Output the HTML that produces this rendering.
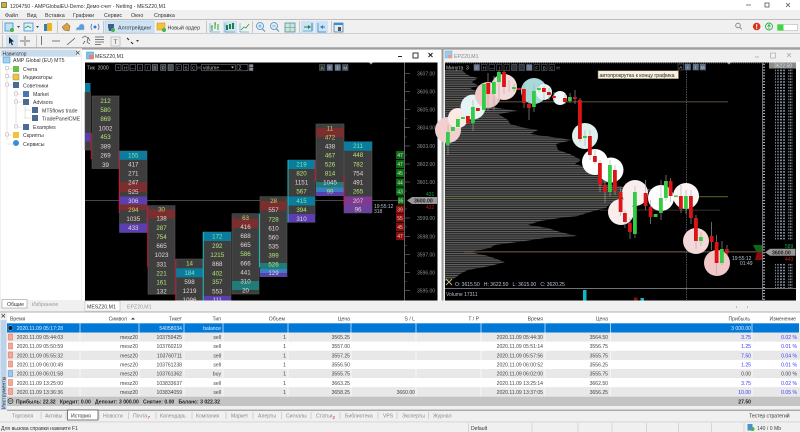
<!DOCTYPE html>
<html><head><meta charset="utf-8"><title>MESZ20,M1</title>
<style>
html,body{margin:0;padding:0;background:#f0f0f0;width:800px;height:432px;overflow:hidden}
svg{display:block;filter:blur(.25px);font-family:"Liberation Sans","Noto Sans CJK SC",sans-serif}
text{white-space:pre}
</style></head><body>
<svg width="800" height="432" viewBox="0 0 800 432" xmlns="http://www.w3.org/2000/svg">
<defs>
<pattern id="prof" width="2" height="2.2" patternUnits="userSpaceOnUse"><rect width="2" height="2.2" fill="#1e1e1e"/><rect width="2" height="1.1" fill="#646464"/></pattern>
<pattern id="tick" width="8" height="2.9" patternUnits="userSpaceOnUse"><rect width="5" height="1" fill="#b8bec8"/></pattern>
<pattern id="lab" width="9" height="2.9" patternUnits="userSpaceOnUse"><rect width="2" height="1.6" fill="#7b8594"/><rect x="3" width="2" height="1.6" fill="#5f6875"/><rect x="6" width="2" height="1.6" fill="#828c9a"/></pattern>
<pattern id="lab2" width="5" height="2.9" patternUnits="userSpaceOnUse"><rect width="1.5" height="1.6" fill="#828c9a"/><rect x="2.5" width="2" height="1.6" fill="#5f6875"/></pattern>
</defs>
<rect width="800" height="432" fill="#f0f0f0"/>
<!-- title -->
<rect width="800" height="10" fill="#fff"/>
<rect x="1.5" y="2.5" width="5" height="5" fill="#e8a33a" stroke="#3f7f3a" stroke-width=".8"/>
<text x="10" y="8" font-size="5.2" fill="#333">1204750 - AMPGlobalEU-Demo: Демо-счет - Netting - MESZ20,M1</text>
<path d="M746 5h5" stroke="#666" stroke-width=".8"/><rect x="765" y="3" width="4" height="4" fill="none" stroke="#555" stroke-width=".8"/><path d="M786 3l4 4M790 3l-4 4" stroke="#555" stroke-width=".8"/>
<!-- menu -->
<g font-size="5.3" fill="#333"><text x="5" y="17">Файл</text><text x="27" y="17">Вид</text><text x="45" y="17">Вставка</text><text x="73" y="17">Графики</text><text x="104" y="17">Сервис</text><text x="131" y="17">Окно</text><text x="154" y="17">Справка</text></g>
<rect y="19" width="800" height="1" fill="#bdbdbd"/>
<!-- toolbar 1 -->
<g>
<rect x="2" y="21" width="1" height="12" fill="#c6c6c6"/>
<rect x="5" y="23" width="8" height="8" fill="#bfe0f5" stroke="#3b8ed0" stroke-width=".8"/><circle cx="12" cy="30" r="2" fill="#45b24a"/><path d="M17 26h3l-1.5 2z" fill="#444"/>
<rect x="24" y="23" width="9" height="8" fill="#dff0fa" stroke="#3b8ed0" stroke-width=".8"/><path d="M25 28l3-2 3 2" stroke="#2e9e44" fill="none" stroke-width=".8"/><path d="M36 26h3l-1.5 2z" fill="#444"/>
<rect x="44" y="24" width="4" height="7" fill="#2c7fc4"/><rect x="47" y="23" width="5" height="8" fill="#efb51f"/>
<rect x="57" y="21" width="1" height="12" fill="#c6c6c6"/>
<path d="M62 27l5-4 3 3-1 5-5-1z" fill="#d9a24a" stroke="#7a5a22" stroke-width=".5"/>
<path d="M76 30q0-3 3-3 0-3 3-3 3 0 2 6z" fill="#5a9ee0" stroke="#bcd" stroke-width=".5"/>
<circle cx="95" cy="27" r="1.5" fill="#3b78c9"/><path d="M92 24q-2 3 0 6M98 24q2 3 0 6" stroke="#3b78c9" fill="none" stroke-width=".8"/>
<rect x="103" y="21" width="1" height="12" fill="#c6c6c6"/>
<rect x="105" y="21" width="49" height="12" fill="#cde2f5" stroke="#a6c8e6" stroke-width=".5"/>
<path d="M108 24h6v3l-1 4h-4l-1-4z" fill="#3a5f8a"/><circle cx="113" cy="30" r="2" fill="#45b24a"/>
<text x="118" y="29.6" font-size="5.3" fill="#333">Алготрейдинг</text>
<rect x="157" y="23" width="8" height="7" fill="#efc33a" stroke="#c48f12" stroke-width=".5"/><circle cx="164" cy="30" r="2" fill="#45b24a"/>
<text x="167.500" y="29.600" font-size="5.300" fill="#333">Новый ордер</text>
<rect x="206" y="21" width="1" height="12" fill="#c6c6c6"/>
<path d="M212 31v-6M212 27h-1M215 29v-7M215 24h1M218 30v-6" stroke="#2e9e44" stroke-width="1"/><path d="M210 32h10M210 32v-9" stroke="#2c7fc4" stroke-width=".5" fill="none"/>
<rect x="223" y="21" width="14" height="12" fill="#cde2f5"/>
<rect x="226" y="25" width="2" height="5" fill="#1f7f46"/><rect x="229" y="24" width="2" height="5" fill="#1f7f46"/><rect x="232" y="23" width="2" height="6" fill="#1f7f46"/><path d="M225 32h10M225 32v-9" stroke="#2c7fc4" stroke-width=".5" fill="none"/>
<path d="M241 30l3-3 2 1 3-4" stroke="#2e9e44" fill="none" stroke-width=".8"/><path d="M240 32h9M240 32v-9" stroke="#2c7fc4" stroke-width=".5" fill="none"/>
<rect x="252" y="21" width="1" height="12" fill="#c6c6c6"/>
<circle cx="260" cy="26" r="3.500" fill="#dcecf8" stroke="#4a8cc4" stroke-width=".8"/><path d="M262.500 29l2.500 2.500" stroke="#4a8cc4"/><path d="M258.500 26h3M260 24.500v3" stroke="#3a7ab0" stroke-width=".6"/>
<circle cx="274" cy="26" r="3.500" fill="#dcecf8" stroke="#4a8cc4" stroke-width=".8"/><path d="M276.500 29l2.500 2.500" stroke="#4a8cc4"/><path d="M272.500 26h3" stroke="#3a7ab0" stroke-width=".6"/>
<rect x="285" y="23" width="10" height="9" fill="#cfe6c8" stroke="#4a8cc4" stroke-width=".8"/><path d="M290 23v9M285 27.500h10" stroke="#4a8cc4" stroke-width=".5"/>
<rect x="299" y="21" width="1" height="12" fill="#c6c6c6"/>
<rect x="301" y="21" width="13" height="12" fill="#cde2f5"/><path d="M304 27h5" stroke="#1f7f46"/><path d="M308 25l3 2-3 2z" fill="#1f7f46"/><path d="M312 23v8" stroke="#2c7fc4"/><path d="M303 31h9" stroke="#2c7fc4" stroke-width=".5"/>
<rect x="315" y="21" width="13" height="12" fill="#cde2f5"/><path d="M318 23v9h8" stroke="#2c7fc4" fill="none" stroke-width=".7"/><path d="M322 27h3" stroke="#2c7fc4"/><path d="M323 25l-3 2 3 2z" fill="#2c7fc4"/>
<rect x="331" y="21" width="1" height="12" fill="#c6c6c6"/>
<rect x="334" y="23" width="9" height="9" fill="#dcecf8" stroke="#3b6f9e" stroke-width=".7"/><rect x="334" y="23" width="9" height="2" fill="#3b8ed0"/><rect x="338" y="27" width="3" height="4" fill="#555"/>
<path d="M738 25.500m-2.300 0a2.300 2.300 0 1 0 4.600 0a2.300 2.300 0 1 0-4.600 0M740 27.500l2 2" stroke="#777" stroke-width=".8" fill="none"/>
<circle cx="756.700" cy="26.500" r="3.800" fill="#d9301c"/><rect x="756.200" y="24" width="1" height="3.500" fill="#fff"/><rect x="756.200" y="28" width="1" height="1" fill="#fff"/>
<circle cx="769" cy="26.500" r="3.500" fill="none" stroke="#2fae4d" stroke-width=".9"/><path d="M769 29v-4M767.500 26.500l1.500-2 1.500 2" stroke="#2fae4d" fill="none" stroke-width=".8"/>
<rect x="777.500" y="24.500" width="20" height="6" fill="#fff" stroke="#aaa" stroke-width=".5"/><rect x="777.500" y="24.500" width="6" height="6" fill="#40d840"/>
</g>
<rect y="33" width="800" height="1" fill="#cfcfcf"/>
<!-- toolbar 2 -->
<rect x="2" y="35" width="1" height="12" fill="#c6c6c6"/>
<rect x="6" y="35" width="12" height="12" fill="#cde2f5"/>
<path d="M9 37l5 4.500-2.500.3 1.500 3-1.200.5-1.300-3-1.500 1.700z" fill="#222"/>
<path d="M25 36v10M20 41h4M26 41h4" stroke="#444" stroke-width=".7"/>
<rect x="36" y="35" width="1" height="12" fill="#c6c6c6"/>
<path d="M41.500 36v9M52 41h8M67 45l8-7" stroke="#555" stroke-width=".8"/>
<path d="M82 38l3-2 3 2-1 4 3 2M83 44l2-3M88 37l2 4" stroke="#555" stroke-width=".7" fill="none"/>
<path d="M95 37h9M95 39.500h9M95 42h9M95 44.500h6" stroke="#555" stroke-width=".8"/>
<rect x="111" y="37" width="9" height="9" fill="none" stroke="#999" stroke-width=".5"/><text x="115.500" y="44" font-size="6.500" text-anchor="middle" fill="#555">T</text>
<path d="M127 38l2 2M131 42l2 2" stroke="#333" stroke-width="1.200"/><path d="M136 40h3l-1.500 2z" fill="#444"/>
<rect y="47" width="800" height="1.500" fill="#b4b4b4"/>
<!-- navigator -->
<rect x="0" y="48.500" width="82" height="259" fill="#f0f0f0"/>
<rect x="1" y="50" width="76" height="6.500" fill="#c9dcef"/>
<text x="2.500" y="55.500" font-size="5" fill="#333">Навигатор</text>
<path d="M76 51l3.500 3.500M79.500 51l-3.500 3.500" stroke="#444" stroke-width=".7"/>
<rect x="1" y="57" width="80" height="243" fill="#fff"/>
<path d="M7 66v74M7 69h6M7 77h6M7 85h6M7 135h6M7 144h6M16 90v38M16 94h6M16 102h6M16 127h6M25 106v13M25 110h6M25 118h6" stroke="#c8c8c8" stroke-width=".5" fill="none"/>
<g fill="#333" font-size="5.200">
<rect x="3" y="57" width="7" height="6" fill="#9fd0f0" stroke="#3b8ed0" stroke-width=".5"/><text x="13" y="62">AMP Global (EU) MT5</text>
<rect x="13" y="66" width="6" height="6" fill="#6cbf4a"/><text x="23" y="71">Счета</text>
<rect x="13" y="74" width="6" height="6" fill="#efc33a" stroke="#777" stroke-width=".4"/><text x="23" y="79">Индикаторы</text>
<rect x="13" y="82" width="6" height="6" fill="#4a6c94"/><text x="23" y="87.500">Советники</text>
<rect x="23" y="91" width="6" height="6" fill="#4a78ac"/><text x="33" y="96">Market</text>
<rect x="23" y="99" width="6" height="6" fill="#4a6c94"/><text x="33" y="104">Advisors</text>
<rect x="32" y="107" width="6" height="6" fill="#4a6c94"/><text x="42" y="112.500">MT5flows trade</text>
<rect x="32" y="115" width="6" height="6" fill="#4a6c94"/><text x="42" y="120.500">TradePanelCME</text>
<rect x="23" y="124" width="6" height="6" fill="#4a6c94"/><text x="33" y="129">Examples</text>
<rect x="13" y="132" width="6" height="6" fill="#efc33a"/><text x="23" y="137">Скрипты</text>
<circle cx="16" cy="143" r="3" fill="#3b8ed0"/><text x="23" y="146">Сервисы</text>
</g>
<g fill="#fff" stroke="#aaa" stroke-width=".5"><rect x="5.500" y="66.500" width="3" height="3"/><rect x="5.500" y="74.500" width="3" height="3"/><rect x="5.500" y="83" width="3" height="3"/><rect x="14.500" y="92" width="3" height="3"/><rect x="14.500" y="100" width="3" height="3"/><rect x="14.500" y="125" width="3" height="3"/><rect x="5.500" y="133" width="3" height="3"/></g>
<rect x="0" y="300" width="82" height="8" fill="#f0f0f0"/>
<rect x="2" y="299.500" width="25" height="8.500" fill="#fff" stroke="#888" stroke-width=".5"/>
<text x="7" y="306" font-size="5.200" fill="#333">Общие</text><text x="32" y="306" font-size="5.200" fill="#999">Избранное</text>
<!-- chart 1 window -->
<rect x="82" y="48.500" width="360" height="253" fill="#fff"/>
<rect x="82" y="48.500" width="360" height="1" fill="#888"/>
<rect x="86.500" y="52" width="7" height="7" fill="#7fc0ec" stroke="#3b8ed0" stroke-width=".5"/><rect x="89" y="55" width="5" height="4" fill="#e8836c"/>
<text x="95" y="58" font-size="5.200" fill="#333">MESZ20,M1</text>
<path d="M398 56.500h4" stroke="#222" stroke-width="1"/><rect x="413" y="53" width="5" height="5" fill="none" stroke="#222" stroke-width=".9"/><path d="M428.500 53l4 4M432.500 53l-4 4" stroke="#222" stroke-width="1.100"/>
<rect x="85" y="62.500" width="352.500" height="238" fill="#000"/>
<rect x="437.500" y="50" width="4" height="251" fill="#fff"/><rect x="441.500" y="48.500" width="2" height="253" fill="#9a9a9a"/>
<!-- chart 1 toolbar -->
<text x="87" y="69.500" font-size="5" fill="#b8bcc4">Тик  2000</text>
<g fill="#000" stroke="#8a8f98" stroke-width=".5"><rect x="115.700" y="64.500" width="5.300" height="6"/><rect x="122.800" y="64.500" width="5.300" height="6"/><rect x="130" y="64.500" width="5.300" height="6"/><rect x="137.300" y="64.500" width="5.300" height="6"/><rect x="145" y="64.500" width="5.300" height="6"/><rect x="152.300" y="64.500" width="5.300" height="6" fill="#30343a"/><rect x="160.600" y="64.500" width="5.300" height="6" fill="#30343a"/><rect x="168" y="64.500" width="5.300" height="6" fill="#4a505a"/><rect x="176" y="64.500" width="5.300" height="6"/><rect x="183.300" y="64.500" width="5.300" height="6"/><rect x="191" y="64.500" width="5.300" height="6"/><rect x="201.700" y="64.300" width="33.500" height="6.500"/><rect x="237" y="64.300" width="11" height="6.500"/></g>
<g font-size="4.500" fill="#9ea3ac" text-anchor="middle"><text x="118.300" y="69.500">+</text><text x="125.500" y="69.500">H</text><text x="132.600" y="69.500">—</text><text x="140" y="69.500">I</text><text x="147.600" y="69.500">/</text><text x="155" y="69.500">B</text><text x="163.200" y="69.500">P</text><text x="178.600" y="69.500">F</text><text x="186" y="69.500">B</text><text x="193.600" y="69.500">C</text><text x="199" y="69.500">H</text></g>
<text x="203" y="69.500" font-size="5" fill="#b8bcc4">volume</text><path d="M231 66.500h3l-1.500 2z" fill="#b8bcc4"/><text x="238.500" y="69.500" font-size="5" fill="#b8bcc4">2</text>
<rect x="249.200" y="64.300" width="4" height="3" fill="#8a8f98"/><rect x="249.200" y="67.800" width="4" height="3" fill="#8a8f98"/>
<g fill="#30343a" stroke="#6a707a" stroke-width=".5"><rect x="319.500" y="64.500" width="5.500" height="6"/><rect x="327" y="64.500" width="5.500" height="6" fill="#6d7c96"/><rect x="335" y="64.500" width="5.500" height="6" fill="#6d7c96"/><rect x="342.500" y="64.500" width="5.500" height="6" fill="#424a58"/></g>
<g font-size="4.500" fill="#c4c8d0" text-anchor="middle"><text x="322.200" y="69.300">A</text><text x="329.700" y="69.300">+</text><text x="337.700" y="69.300">I</text><text x="345.200" y="69.300">M</text></g>
<path d="M369 62.500h4l-2 2z" fill="#9cb0cc"/>
<!-- crosshair -->
<rect x="85" y="200" width="320" height=".8" fill="#5a5a5a"/>
<!-- footprint cells -->
<g fill="#3e3e3e" stroke="#555" stroke-width=".6">
<rect x="85" y="92" width="5.500" height="58"/>
<rect x="92" y="96" width="27" height="72.500"/>
<rect x="119.500" y="151" width="27.500" height="81.500"/>
<rect x="148" y="205.700" width="27" height="88.500"/>
<rect x="176" y="259" width="27" height="41.500"/>
<rect x="203.500" y="232" width="27.500" height="68.500"/>
<rect x="232" y="213.700" width="27" height="80.300"/>
<rect x="260" y="196.700" width="27" height="80"/>
<rect x="288" y="160" width="27" height="62.300"/>
<rect x="316" y="124" width="28" height="71.700"/>
<rect x="344" y="141.700" width="28" height="71.300"/>
</g>
<!-- coloured cells -->
<rect x="85" y="83" width="5.500" height="9" fill="#0a7d9e"/><rect x="85" y="133" width="5.500" height="8.500" fill="#5b3fb0"/>
<rect x="119.500" y="151" width="27.500" height="8.800" fill="#0a7d9e"/>
<rect x="119.500" y="182" width="27.500" height="10" fill="#7a2e2e"/>
<rect x="119.500" y="196.500" width="27.500" height="8" fill="#5b3fb0"/>
<rect x="119.500" y="204.500" width="27.500" height="5.500" fill="#7a2e2e"/>
<rect x="119.500" y="223.500" width="27.500" height="9" fill="#5b3fb0"/>
<rect x="148" y="209.500" width="27" height="9" fill="#7a2e2e"/>
<rect x="176" y="268.300" width="27" height="9" fill="#0a7d9e"/>
<rect x="203.500" y="232" width="27.500" height="9" fill="#0a7d9e"/>
<rect x="203.500" y="296" width="27.500" height="4.500" fill="#5b3fb0"/>
<rect x="232" y="218.500" width="27" height="9.500" fill="#7a2e2e"/>
<rect x="232" y="281" width="27" height="9" fill="#1f7c78"/>
<rect x="260" y="201" width="27" height="9.500" fill="#7a2e2e"/>
<rect x="260" y="263" width="27" height="6" fill="#1f7c78"/><rect x="260" y="269" width="27" height="4" fill="#3a7fc4"/><rect x="260" y="273" width="27" height="3.700" fill="#5b3fb0"/>
<rect x="288" y="160" width="27" height="9" fill="#0a7d9e"/><rect x="288" y="196.500" width="27" height="9" fill="#0a7d9e"/><rect x="288" y="214" width="27" height="8.300" fill="#5b3fb0"/>
<rect x="316" y="128" width="28" height="9" fill="#7a2e2e"/>
<rect x="316" y="182" width="28" height="5.500" fill="#1f7c78"/><rect x="316" y="187.500" width="28" height="4.500" fill="#3a7fc4"/><rect x="316" y="192" width="28" height="3.700" fill="#5b3fb0"/>
<rect x="344" y="141.700" width="28" height="9" fill="#0a7d9e"/>
<rect x="344" y="196.500" width="28" height="9" fill="#7d3a90"/><rect x="344" y="205.500" width="28" height="7.500" fill="#6a429c"/>
<!-- side bars -->
<g stroke-width=".9">
<path d="M91.200 133v26M119.200 151v62M147.700 205.700v61.500M175.700 259v41.500M315.700 160v22M344 175v30" stroke="#d01a3c"/>
<path d="M203.200 232v68.500M259.500 213.700v53.500M288 160v62.500" stroke="#19c6d0"/>
</g>
<!-- cell text -->
<g font-size="6.200" text-anchor="middle" fill="#e2d4d4">
<g transform="translate(105.500 0)"><text y="103" fill="#b4e478">212</text><text y="112" fill="#b4e478">580</text><text y="121" fill="#b4e478">869</text><text y="130.300">1002</text><text y="139" fill="#b4e478">453</text><text y="148.500">389</text><text y="157.700">269</text><text y="167">39</text></g>
<g transform="translate(133.300 0)"><text y="157.500" fill="#7de8a8">155</text><text y="166.600">417</text><text y="175.700">271</text><text y="184.700">247</text><text y="194">525</text><text y="203">306</text><text y="212" fill="#c8d06e">294</text><text y="221">1035</text><text y="230.200">433</text></g>
<g transform="translate(161.500 0)"><text y="211.700" fill="#c8d06e">30</text><text y="220.700">138</text><text y="229.900" fill="#b4e478">287</text><text y="239" fill="#b4e478">754</text><text y="248">665</text><text y="257.200">1023</text><text y="266.400">331</text><text y="275.500" fill="#b4e478">221</text><text y="284.700" fill="#b4e478">161</text><text y="293.500">132</text></g>
<g transform="translate(189.500 0)"><text y="265.500" fill="#b4e478">14</text><text y="275" fill="#7de8a8">184</text><text y="284">598</text><text y="293">1219</text><text y="302">1096</text></g>
<g transform="translate(217.300 0)"><text y="238.700" fill="#7de8a8">172</text><text y="248" fill="#b4e478">292</text><text y="257" fill="#b4e478">1215</text><text y="266.200">868</text><text y="275.300" fill="#b4e478">402</text><text y="284.200" fill="#b4e478">357</text><text y="293.300">553</text><text y="302">111</text></g>
<g transform="translate(245.500 0)"><text y="220" fill="#c8d06e">63</text><text y="229">416</text><text y="238">688</text><text y="247.200">665</text><text y="256.200" fill="#b4e478">586</text><text y="265.400">666</text><text y="274.500">441</text><text y="283.500">310</text><text y="292.700">20</text></g>
<g transform="translate(273.500 0)"><text y="203" fill="#c8d06e">28</text><text y="212">557</text><text y="221.500" fill="#b4e478">728</text><text y="230.500">610</text><text y="239.500">560</text><text y="248.500">535</text><text y="257.500" fill="#b4e478">399</text><text y="266.500" fill="#b4e478">526</text><text y="275">129</text></g>
<g transform="translate(301.500 0)"><text y="166.500" fill="#7de8a8">219</text><text y="175.500" fill="#b4e478">820</text><text y="184.500">1151</text><text y="193.700" fill="#b4e478">567</text><text y="203" fill="#7de8a8">415</text><text y="212" fill="#b4e478">394</text><text y="220.800">310</text></g>
<g transform="translate(330 0)"><text y="130.700" fill="#c8d06e">11</text><text y="139.500" fill="#c8d06e">472</text><text y="148.500">438</text><text y="157.500" fill="#b4e478">467</text><text y="166.700" fill="#b4e478">526</text><text y="175.700" fill="#b4e478">814</text><text y="184.700">1045</text><text y="193.700" fill="#b4e478">99</text></g>
<g transform="translate(358 0)"><text y="148.200" fill="#7de8a8">211</text><text y="157.200" fill="#b4e478">448</text><text y="166.300" fill="#b4e478">782</text><text y="175.700">754</text><text y="184.700">491</text><text y="193.700" fill="#b4e478">265</text><text y="203">207</text><text y="211.700">96</text></g>
</g>
<text x="374" y="208" font-size="5" fill="#b8c4d4">19:55:12</text><text x="374" y="213" font-size="5" fill="#b8c4d4">318</text>
<!-- delta boxes -->
<g fill="#0a6a14"><rect x="396" y="151" width="8" height="8"/><rect x="396" y="160" width="8" height="8"/><rect x="396" y="169" width="8" height="8"/><rect x="396" y="178.500" width="8" height="8"/><rect x="396" y="187.500" width="8" height="8"/><rect x="398" y="196.500" width="6" height="8"/></g>
<g fill="#8a0c0c"><rect x="396" y="205.500" width="8" height="8"/><rect x="396" y="214" width="8" height="8"/><rect x="396" y="223" width="8" height="8"/><rect x="396" y="232" width="8" height="8"/></g>
<g font-size="5" text-anchor="middle" fill="#d8e8d0"><text x="400" y="157">47</text><text x="400" y="166">47</text><text x="400" y="175">45</text><text x="400" y="184.500">44</text><text x="400" y="193.500">43</text><text x="400.500" y="202.500">36</text></g>
<g font-size="5" text-anchor="middle" fill="#f0c8c8"><text x="400" y="211.500">39</text><text x="400" y="220">55</text><text x="400" y="229">45</text><text x="400" y="238">47</text></g>
<!-- axis 1 -->
<rect x="404.300" y="62.500" width=".7" height="238" fill="#8a8f98"/>
<path d="M405 73.500h5M405 91.500h5M405 109.500h5M405 127.700h5M405 146h5M405 164h5M405 182h5M405 218h5M405 236.500h5M405 254.500h5M405 272.500h5M405 290.500h5" stroke="#8a8f98" stroke-width=".6"/>
<path d="M405 82.500h2M405 100.500h2M405 118.500h2M405 137h2M405 155h2M405 173h2M405 191h2M405 209h2M405 227h2M405 245.500h2M405 263.500h2M405 281.500h2" stroke="#666" stroke-width=".6"/>
<g font-size="5" fill="#8a8f98"><text x="417" y="75.500">3607.00</text><text x="417" y="93.500">3606.00</text><text x="417" y="111.500">3605.00</text><text x="417" y="129.700">3604.00</text><text x="417" y="148">3603.00</text><text x="417" y="166">3602.00</text><text x="417" y="184">3601.00</text><text x="417" y="220">3599.00</text><text x="417" y="238.500">3598.00</text><text x="417" y="256.500">3597.00</text><text x="417" y="274.500">3596.00</text><text x="417" y="292.500">3595.00</text></g>
<path d="M407 200.500l5-3.500h25v7h-25z" fill="#9a9a9a"/><text x="414" y="202.500" font-size="5.200" font-weight="bold" fill="#222">3600.00</text>
<text x="426" y="196" font-size="5" fill="#0aa84a">431</text><text x="426" y="209" font-size="5" fill="#d01818">422</text>
<!-- chart 2 window -->
<rect x="443.500" y="48.500" width="356.500" height="253" fill="#f0f0f0"/>
<rect x="443.500" y="48.500" width="356.500" height="1" fill="#888"/>
<rect x="445" y="51" width="7" height="7" fill="#9ccbea" stroke="#6eaedc" stroke-width=".5"/><rect x="448" y="55" width="4" height="3" fill="#eb9d8c"/>
<text x="454" y="58" font-size="5.200" fill="#888">EPZ20,M1</text>
<path d="M755 57h4" stroke="#aaa" stroke-width=".8"/><rect x="770.500" y="53" width="5" height="5" fill="none" stroke="#aaa" stroke-width=".7"/><path d="M787 53l4 4M791 53l-4 4" stroke="#aaa" stroke-width=".8"/>
<rect x="445" y="62.500" width="351" height="238" fill="#000"/>
<rect x="796" y="62" width="4" height="239" fill="#fff"/>
<path d="M445 63h351" stroke="#8a8f98" stroke-width=".6" stroke-dasharray="1 1"/>
<!-- profile -->
<polygon fill="url(#prof)" points="445,70 462,70 466,74 470,76 478,78 472,82 479,86 470,88 478,92 476,96 488,100 480,104 498,108 518,111 498,114 508,120 510,124 525,128 538,130 530,134 552,137 572,140 556,144 558,150 570,154 581,160 575,164 595,170 605,178 618,181 600,184 640,188 655,190 640,194 632,198 612,202 606,208 590,212 578,216 560,218 540,221 528,225 548,228 560,232 577,236 545,238 525,241 495,245 490,248 470,252 488,256 505,262 490,266 468,270 460,274 455,278 445,281"/>
<!-- long lines -->
<rect x="445" y="101.400" width="283" height=".9" fill="#6a5a46"/>
<rect x="445" y="196.300" width="283" height=".9" fill="#5d7a24"/>
<rect x="600" y="209.700" width="120" height=".8" fill="#404040"/>
<rect x="464" y="251.300" width="298" height="1.100" fill="#6a5a46"/>
<rect x="686.300" y="63" width=".7" height="237" fill="#8a8f98" opacity=".8"/><path d="M686.600 63v237" stroke="#000" stroke-width=".8" stroke-dasharray="1 1.500"/>
<!-- circles -->
<g>
<circle cx="448" cy="130" r="13" fill="#f2d0d0"/><circle cx="458" cy="118" r="10" fill="#fce8e4"/><circle cx="473" cy="107" r="12.500" fill="#e4f3f3"/><circle cx="488" cy="95" r="13" fill="#f0c8c8"/><circle cx="504" cy="87" r="13" fill="#f4dada"/>
<circle cx="534" cy="91" r="13" fill="#a8d8d8"/><circle cx="544" cy="92" r="8" fill="#e8f4f4"/><circle cx="560" cy="98" r="7" fill="#f0f8f8"/>
<circle cx="585" cy="136" r="13" fill="#e0f0ee"/><circle cx="595" cy="162" r="13" fill="#fff"/><circle cx="611" cy="170" r="12.500" fill="#fff"/>
<circle cx="635" cy="193" r="13" fill="#f8eeee"/><circle cx="621" cy="212" r="13" fill="#f8ecec"/><circle cx="661" cy="198" r="13" fill="#fff"/><circle cx="686" cy="196" r="13" fill="#fdf5f5"/>
<circle cx="696" cy="241" r="13" fill="#f2d8d8"/><circle cx="717" cy="263" r="13" fill="#f0c8c8"/>
</g>
<!-- wicks -->
<path d="M448 125v30M473 100v31M488 73v38M494 76v34M499 70v32M504 70v24M509 80v12M514 84v8M524 84v24M529 100v20M534 84v28M539 84v8M544 86v14M549 88v12M554 92v10M565 94v10M570 93v10M575 90v14M580 98v44M585 130v16M590 130v30M595 150v14M600 160v32M605 180v23M610 160v36M615 165v30M620.700 188v28M625 210v18M630 218v21M635 186v52M645.700 180v30M650.700 200v24M661 180v40M666 175v26M670.700 178v24M681 185v28M686 190v24M691 190v34M696 215v34M701 232v14M711.700 222v28M716.700 235v40M722 241v24M727 245v10" stroke="#aaa" stroke-width=".6"/>
<!-- candles -->
<g fill="#dd1414">
<rect x="466" y="116" width="3.800" height="7"/><rect x="476" y="108" width="3.800" height="3"/><rect x="486.300" y="83" width="3.800" height="11"/><rect x="502.100" y="72" width="3.800" height="15"/><rect x="517" y="88" width="3.800" height="2"/><rect x="522" y="89" width="3.800" height="14"/><rect x="527" y="104" width="3.800" height="4"/><rect x="542" y="88" width="3.800" height="4"/><rect x="547" y="92" width="3.800" height="3"/><rect x="552" y="96" width="3.800" height="2"/><rect x="563" y="98" width="3.800" height="4"/><rect x="573" y="97" width="3.800" height="2"/><rect x="578" y="100" width="3.800" height="39"/><rect x="588" y="136" width="3.800" height="19"/><rect x="593" y="156" width="3.800" height="6"/><rect x="598" y="163" width="3.800" height="22"/><rect x="603" y="185" width="3.800" height="7"/><rect x="613" y="170" width="3.800" height="21"/><rect x="618.700" y="192" width="3.800" height="20"/><rect x="623" y="213" width="3.800" height="9"/><rect x="628" y="223" width="3.800" height="9"/><rect x="643.700" y="193" width="3.800" height="13"/><rect x="648.700" y="207" width="3.800" height="10"/><rect x="668.700" y="181" width="3.800" height="15"/><rect x="679" y="196" width="3.800" height="13"/><rect x="689" y="196" width="3.800" height="22"/><rect x="694" y="218" width="3.800" height="23"/><rect x="709.700" y="236" width="3.800" height="6"/><rect x="714.700" y="242" width="3.800" height="21"/><rect x="725" y="249" width="3.800" height="4"/>
</g>
<g fill="#33cc44">
<rect x="446" y="132" width="3.800" height="13"/><rect x="451" y="127" width="3.800" height="4"/><rect x="456" y="119" width="3.800" height="8"/><rect x="461" y="117" width="3.800" height="2"/><rect x="471" y="107" width="3.800" height="16"/><rect x="482" y="84" width="3.800" height="26"/><rect x="492" y="82" width="3.800" height="12"/><rect x="497" y="72" width="3.800" height="10"/><rect x="512" y="87" width="3.800" height="2"/><rect x="532" y="91" width="3.800" height="16"/><rect x="537" y="88" width="3.800" height="2"/><rect x="568" y="97" width="3.800" height="4"/><rect x="583" y="136" width="3.800" height="2"/><rect x="608" y="165" width="3.800" height="27"/><rect x="633" y="192" width="3.800" height="42"/><rect x="653.700" y="214" width="3.800" height="3"/><rect x="659" y="198" width="3.800" height="15"/><rect x="664" y="181" width="3.800" height="17"/><rect x="674" y="195.500" width="3.800" height="1.500"/><rect x="684" y="196" width="3.800" height="13"/><rect x="699" y="237" width="3.800" height="4"/><rect x="720" y="249" width="3.800" height="14"/>
</g>
<!-- chart2 toolbar -->
<text x="446" y="69.500" font-size="5" fill="#b8bcc4">Минута  3</text>
<g fill="#000" stroke="#6a707a" stroke-width=".5"><rect x="474" y="64.500" width="5.500" height="6" fill="#6d7c96"/><rect x="481.500" y="64.500" width="5.500" height="6"/><rect x="489" y="64.500" width="5.500" height="6"/><rect x="496.500" y="64.500" width="5.500" height="6"/><rect x="504" y="64.500" width="5.500" height="6"/><rect x="511.500" y="64.500" width="5.500" height="6" fill="#30343a"/><rect x="519" y="64.500" width="5.500" height="6" fill="#30343a"/><rect x="526.500" y="64.500" width="5.500" height="6" fill="#6d7c96"/><rect x="534" y="64.500" width="5.500" height="6"/><rect x="541.500" y="64.500" width="5.500" height="6"/><rect x="549" y="64.500" width="5.500" height="6"/></g>
<g font-size="4.500" fill="#9ea3ac" text-anchor="middle"><text x="476.700" y="69.300">+</text><text x="484.200" y="69.300">H</text><text x="491.700" y="69.300">—</text><text x="499.200" y="69.300">I</text><text x="506.700" y="69.300">/</text><text x="536.700" y="69.300">F</text><text x="544.200" y="69.300">B</text><text x="551.700" y="69.300">C</text><text x="558" y="69.300">H</text></g>
<g fill="#30343a" stroke="#6a707a" stroke-width=".5"><rect x="678" y="64" width="5.500" height="6" fill="#000"/><rect x="685" y="64" width="5.500" height="6" fill="#58708c"/><rect x="693" y="64" width="5.500" height="6" fill="#58708c"/><rect x="700" y="64" width="5.500" height="6" fill="#58708c"/></g>
<g font-size="4.500" fill="#c4c8d0" text-anchor="middle"><text x="680.700" y="68.800">A</text><text x="687.700" y="68.800">+</text><text x="695.700" y="68.800">I</text><text x="702.700" y="68.800">M</text></g>
<path d="M727 62.500h4l-2 2z" fill="#9cb0cc"/>
<!-- tooltip -->
<rect x="598" y="70.700" width="80.500" height="8" fill="#f7f2e2" stroke="#7a6a4a" stroke-width=".6"/>
<text x="599.500" y="76.800" font-size="5.200" fill="#222">автопрокрутка к концу графика</text>
<!-- axis 2 -->
<rect x="762" y="63" width=".8" height="237" fill="#8a8f98"/>
<rect x="763" y="63" width="5" height="237" fill="url(#tick)"/>
<rect x="775" y="68" width="10" height="172" fill="url(#lab)"/><rect x="788" y="68" width="5" height="172" fill="url(#lab2)"/>
<rect x="775" y="263" width="10" height="25" fill="url(#lab)"/><rect x="788" y="263" width="5" height="25" fill="url(#lab2)"/>
<rect x="769" y="62.500" width="27" height="6" fill="#8c8c8c"/><text x="774" y="67.500" font-size="5" fill="#ddd">3622.50</text>
<path d="M753 245h9v6h-6z" fill="#0a6a14"/><path d="M755 260l2-8h5v8z" fill="#8a0c0c"/>
<path d="M765 252.300l5-3.500h25.500v7h-25.500z" fill="#9a9a9a"/><text x="772" y="254.300" font-size="5.200" font-weight="bold" fill="#222">3600.00</text>
<text x="785" y="248" font-size="5" fill="#0aa84a">589</text><text x="785" y="261" font-size="5" fill="#d01818">443</text>
<text x="732" y="260" font-size="5" fill="#b8c4d4">19:55:12</text><text x="740" y="265" font-size="5" fill="#b8c4d4">01:49</text>
<path d="M446 279l6 6M452 279l-6 6" stroke="#c8b070" stroke-width="1"/>
<text x="455" y="286" font-size="5" fill="#b8c4d4">O: 3615.50   H: 3622.50   L: 3615.00   C: 3620.25</text>
<rect x="445" y="288" width="351" height=".8" fill="#8a8f98"/>
<text x="446" y="296" font-size="5" fill="#b8bcc4">Volume 17311</text>
<rect x="583" y="290" width="3.500" height="10.500" fill="#0bb8c4"/><rect x="634" y="297.500" width="3.500" height="3" fill="#8a0c0c"/><rect x="640.500" y="298" width="3.500" height="2.500" fill="#0bb8c4"/>
<!-- chart tabs -->
<rect x="82" y="300.500" width="718" height="11" fill="#f0f0f0"/>
<rect x="85" y="301" width="35" height="10" fill="#fff" stroke="#aaa" stroke-width=".5"/>
<text x="87" y="308.700" font-size="5.200" fill="#333">MESZ20,M1</text><text x="127" y="308.700" font-size="5.200" fill="#999">EPZ20,M1</text>
<path d="M738 306l-1 1 1 1M748 306l1 1-1 1" stroke="#888" stroke-width=".5" fill="none" transform="translate(-1 0)"/>
<!-- bottom panel -->
<rect x="0" y="311.500" width="800" height="1" fill="#b0b0b0"/>
<rect x="0" y="312.500" width="7" height="98" fill="#f0f0f0"/>
<path d="M1.500 314l3.500 3.500M5 314l-3.500 3.500" stroke="#333" stroke-width=".7"/>
<rect x="0.500" y="320" width="6" height="90" fill="#bcd3ea"/>
<text transform="translate(5.500 409) rotate(-90)" font-size="5.200" fill="#333">Инструменты</text>
<rect x="7" y="312.500" width="793" height="11" fill="#fff"/>
<g font-size="5.100" fill="#444">
<text x="10" y="320.500">Время</text>
<g text-anchor="end"><text x="127" y="320.500">Символ</text><text x="182" y="320.500">Тикет</text><text x="221" y="320.500">Тип</text><text x="285" y="320.500">Объем</text><text x="350" y="320.500">Цена</text><text x="415" y="320.500">S / L</text><text x="479" y="320.500">T / P</text><text x="543" y="320.500">Время</text><text x="608" y="320.500">Цена</text><text x="750" y="320.500">Прибыль</text><text x="796" y="320.500">Изменение</text></g>
</g>
<path d="M131 319.500h4l-2-2z" fill="#333"/>
<!-- rows -->
<rect x="7" y="323.300" width="792" height="9.300" fill="#0078d7"/>
<rect x="7" y="332.600" width="793" height="9.100" fill="#e8e8e8"/><rect x="7" y="341.700" width="793" height="9.100" fill="#fff"/><rect x="7" y="350.800" width="793" height="9.100" fill="#e8e8e8"/><rect x="7" y="359.900" width="793" height="9.100" fill="#fff"/><rect x="7" y="369" width="793" height="9.100" fill="#e8e8e8"/><rect x="7" y="378.100" width="793" height="9.100" fill="#fff"/><rect x="7" y="387.200" width="793" height="9.500" fill="#e8e8e8"/>
<path d="M80 312.500v84M139 312.500v84M184 312.500v84M223 312.500v84M288 312.500v84M351 312.500v84M416 312.500v84M481 312.500v84M545 312.500v84M610.500 312.500v84M752 312.500v84" stroke="#fff" stroke-width=".8" opacity=".8"/>
<circle cx="10.500" cy="328" r="2.500" fill="#123" stroke="#9cf" stroke-width=".5"/>
<g fill="#f6a898" stroke="#d86a50" stroke-width=".5"><rect x="8.500" y="334" width="4" height="6"/><rect x="8.500" y="343" width="4" height="6"/><rect x="8.500" y="352" width="4" height="6"/><rect x="8.500" y="361" width="4" height="6"/><rect x="8.500" y="379.500" width="4" height="6"/><rect x="8.500" y="388.500" width="4" height="6"/></g>
<rect x="8.500" y="370.500" width="4" height="6" fill="#9cc8ee" stroke="#3b8ed0" stroke-width=".5"/>
<g font-size="5.100" fill="#e2f0fc"><text x="16.700" y="330">2020.11.09 05:17:28</text><text x="182" y="330" text-anchor="end">54058034</text><text x="221" y="330" text-anchor="end">balance</text><text x="751" y="330" text-anchor="end">3 000.00</text></g>
<g font-size="5.100" fill="#444">
<text x="16.700" y="339">2020.11.09 05:44:03</text><text x="16.700" y="348">2020.11.09 05:50:59</text><text x="16.700" y="357.400">2020.11.09 05:55:32</text><text x="16.700" y="366.500">2020.11.09 06:00:49</text><text x="16.700" y="375.700">2020.11.09 06:01:58</text><text x="16.700" y="384.800">2020.11.09 13:25:00</text><text x="16.700" y="394">2020.11.09 13:36:36</text>
<g text-anchor="end">
<text x="138" y="339">mesz20</text><text x="138" y="348">mesz20</text><text x="138" y="357.400">mesz20</text><text x="138" y="366.500">mesz20</text><text x="138" y="375.700">mesz20</text><text x="138" y="384.800">mesz20</text><text x="138" y="394">mesz20</text>
<text x="182" y="339">103759425</text><text x="182" y="348">103760219</text><text x="182" y="357.400">103760711</text><text x="182" y="366.500">103761238</text><text x="182" y="375.700">103761362</text><text x="182" y="384.800">103833637</text><text x="182" y="394">103834059</text>
<text x="221" y="339">sell</text><text x="221" y="348">sell</text><text x="221" y="357.400">sell</text><text x="221" y="366.500">sell</text><text x="221" y="375.700">buy</text><text x="221" y="384.800">sell</text><text x="221" y="394">sell</text>
<text x="286" y="339">1</text><text x="286" y="348">1</text><text x="286" y="357.400">1</text><text x="286" y="366.500">1</text><text x="286" y="375.700">1</text><text x="286" y="384.800">1</text><text x="286" y="394">1</text>
<text x="350" y="339">3565.25</text><text x="350" y="348">3557.00</text><text x="350" y="357.400">3557.25</text><text x="350" y="366.500">3556.50</text><text x="350" y="375.700">3555.75</text><text x="350" y="384.800">3663.25</text><text x="350" y="394">3658.25</text>
<text x="415" y="394">3660.00</text>
<text x="543" y="339">2020.11.09 05:44:30</text><text x="543" y="348">2020.11.09 05:51:14</text><text x="543" y="357.400">2020.11.09 05:57:56</text><text x="543" y="366.500">2020.11.09 06:00:52</text><text x="543" y="375.700">2020.11.09 06:02:00</text><text x="543" y="384.800">2020.11.09 13:25:14</text><text x="543" y="394">2020.11.09 13:37:05</text>
<text x="608" y="339">3564.50</text><text x="608" y="348">3556.75</text><text x="608" y="357.400">3555.75</text><text x="608" y="366.500">3556.25</text><text x="608" y="375.700">3555.75</text><text x="608" y="384.800">3662.50</text><text x="608" y="394">3656.25</text>
<g fill="#3a3aff"><text x="751" y="339">3.75</text><text x="751" y="348">1.25</text><text x="751" y="357.400">7.50</text><text x="751" y="366.500">1.25</text><text x="751" y="384.800">3.75</text><text x="751" y="394">10.00</text>
<text x="797" y="339">0.02 %</text><text x="797" y="348">0.01 %</text><text x="797" y="357.400">0.04 %</text><text x="797" y="366.500">0.01 %</text><text x="797" y="384.800">0.02 %</text><text x="797" y="394">0.05 %</text></g>
<text x="751" y="375.700">0.00</text><text x="797" y="375.700">0.00 %</text>
</g></g>
<!-- summary -->
<rect x="7" y="396.700" width="793" height="9.300" fill="#c4c4c4"/>
<circle cx="10.500" cy="401" r="2.500" fill="none" stroke="#333" stroke-width=".7"/><path d="M9 401h3" stroke="#333" stroke-width=".6"/>
<text x="16" y="403.500" font-size="5.100" font-weight="bold" fill="#222">Прибыль: 22.32   Кредит: 0.00   Депозит: 3 000.00   Снятие: 0.00   Баланс: 3 022.32</text>
<text x="751" y="403.500" font-size="5.100" font-weight="bold" text-anchor="end" fill="#222">27.50</text>
<!-- tabs -->
<rect x="7" y="406" width="793" height="15.500" fill="#f0f0f0"/>
<rect x="7" y="409.700" width="793" height="1" fill="#8a8a8a"/>
<rect x="67.500" y="410" width="30.500" height="10" fill="#fff" stroke="#444" stroke-width=".7"/>
<g font-size="5.100" fill="#8a8a8a">
<text x="12" y="417.500">Торговля</text><text x="45" y="417.500">Активы</text><text x="71" y="417.500" fill="#333">История</text><text x="103" y="417.500">Новости</text><text x="133" y="417.500">Почта</text><text x="160" y="417.500">Календарь</text><text x="196" y="417.500">Компания</text><text x="231" y="417.500">Маркет</text><text x="258" y="417.500">Алерты</text><text x="286" y="417.500">Сигналы</text><text x="316" y="417.500">Статьи</text><text x="345" y="417.500">Библиотека</text><text x="383" y="417.500">VPS</text><text x="402" y="417.500">Эксперты</text><text x="433" y="417.500">Журнал</text><text x="749" y="417.500" fill="#333">Тестер стратегий</text>
<text x="147.500" y="419" fill="#d02020" font-size="4.500">7</text><text x="332.500" y="419" fill="#d02020" font-size="4.500">2</text>
</g>
<path d="M41 412v7M66 412v7M99 412v7M128.500 412v7M156 412v7M192 412v7M226 412v7M253 412v7M281.500 412v7M311 412v7M340 412v7M378 412v7M397 412v7M428.500 412v7" stroke="#c4c4c4" stroke-width=".7"/>
<!-- status bar -->
<rect y="421.500" width="800" height="10.500" fill="#f0f0f0"/>
<rect y="421.500" width="800" height=".8" fill="#d0d0d0"/>
<text x="1" y="430" font-size="5.100" fill="#333">Для вызова справки нажмите F1</text>
<text x="471" y="430" font-size="5.100" fill="#333">Default</text>
<path d="M468.500 423v9M532 423v9M578 423v9M612 423v9M646.500 423v9M678.500 423v9M711.500 423v9M744 423v9" stroke="#c8c8c8" stroke-width=".7"/>
<rect x="747.500" y="424" width="5" height="6.500" fill="#4a90d8"/><circle cx="752.500" cy="429" r="2" fill="#45b24a"/>
<text x="757" y="430" font-size="5.100" fill="#444">140 / 0 Mb</text>
</svg>
</body></html>
